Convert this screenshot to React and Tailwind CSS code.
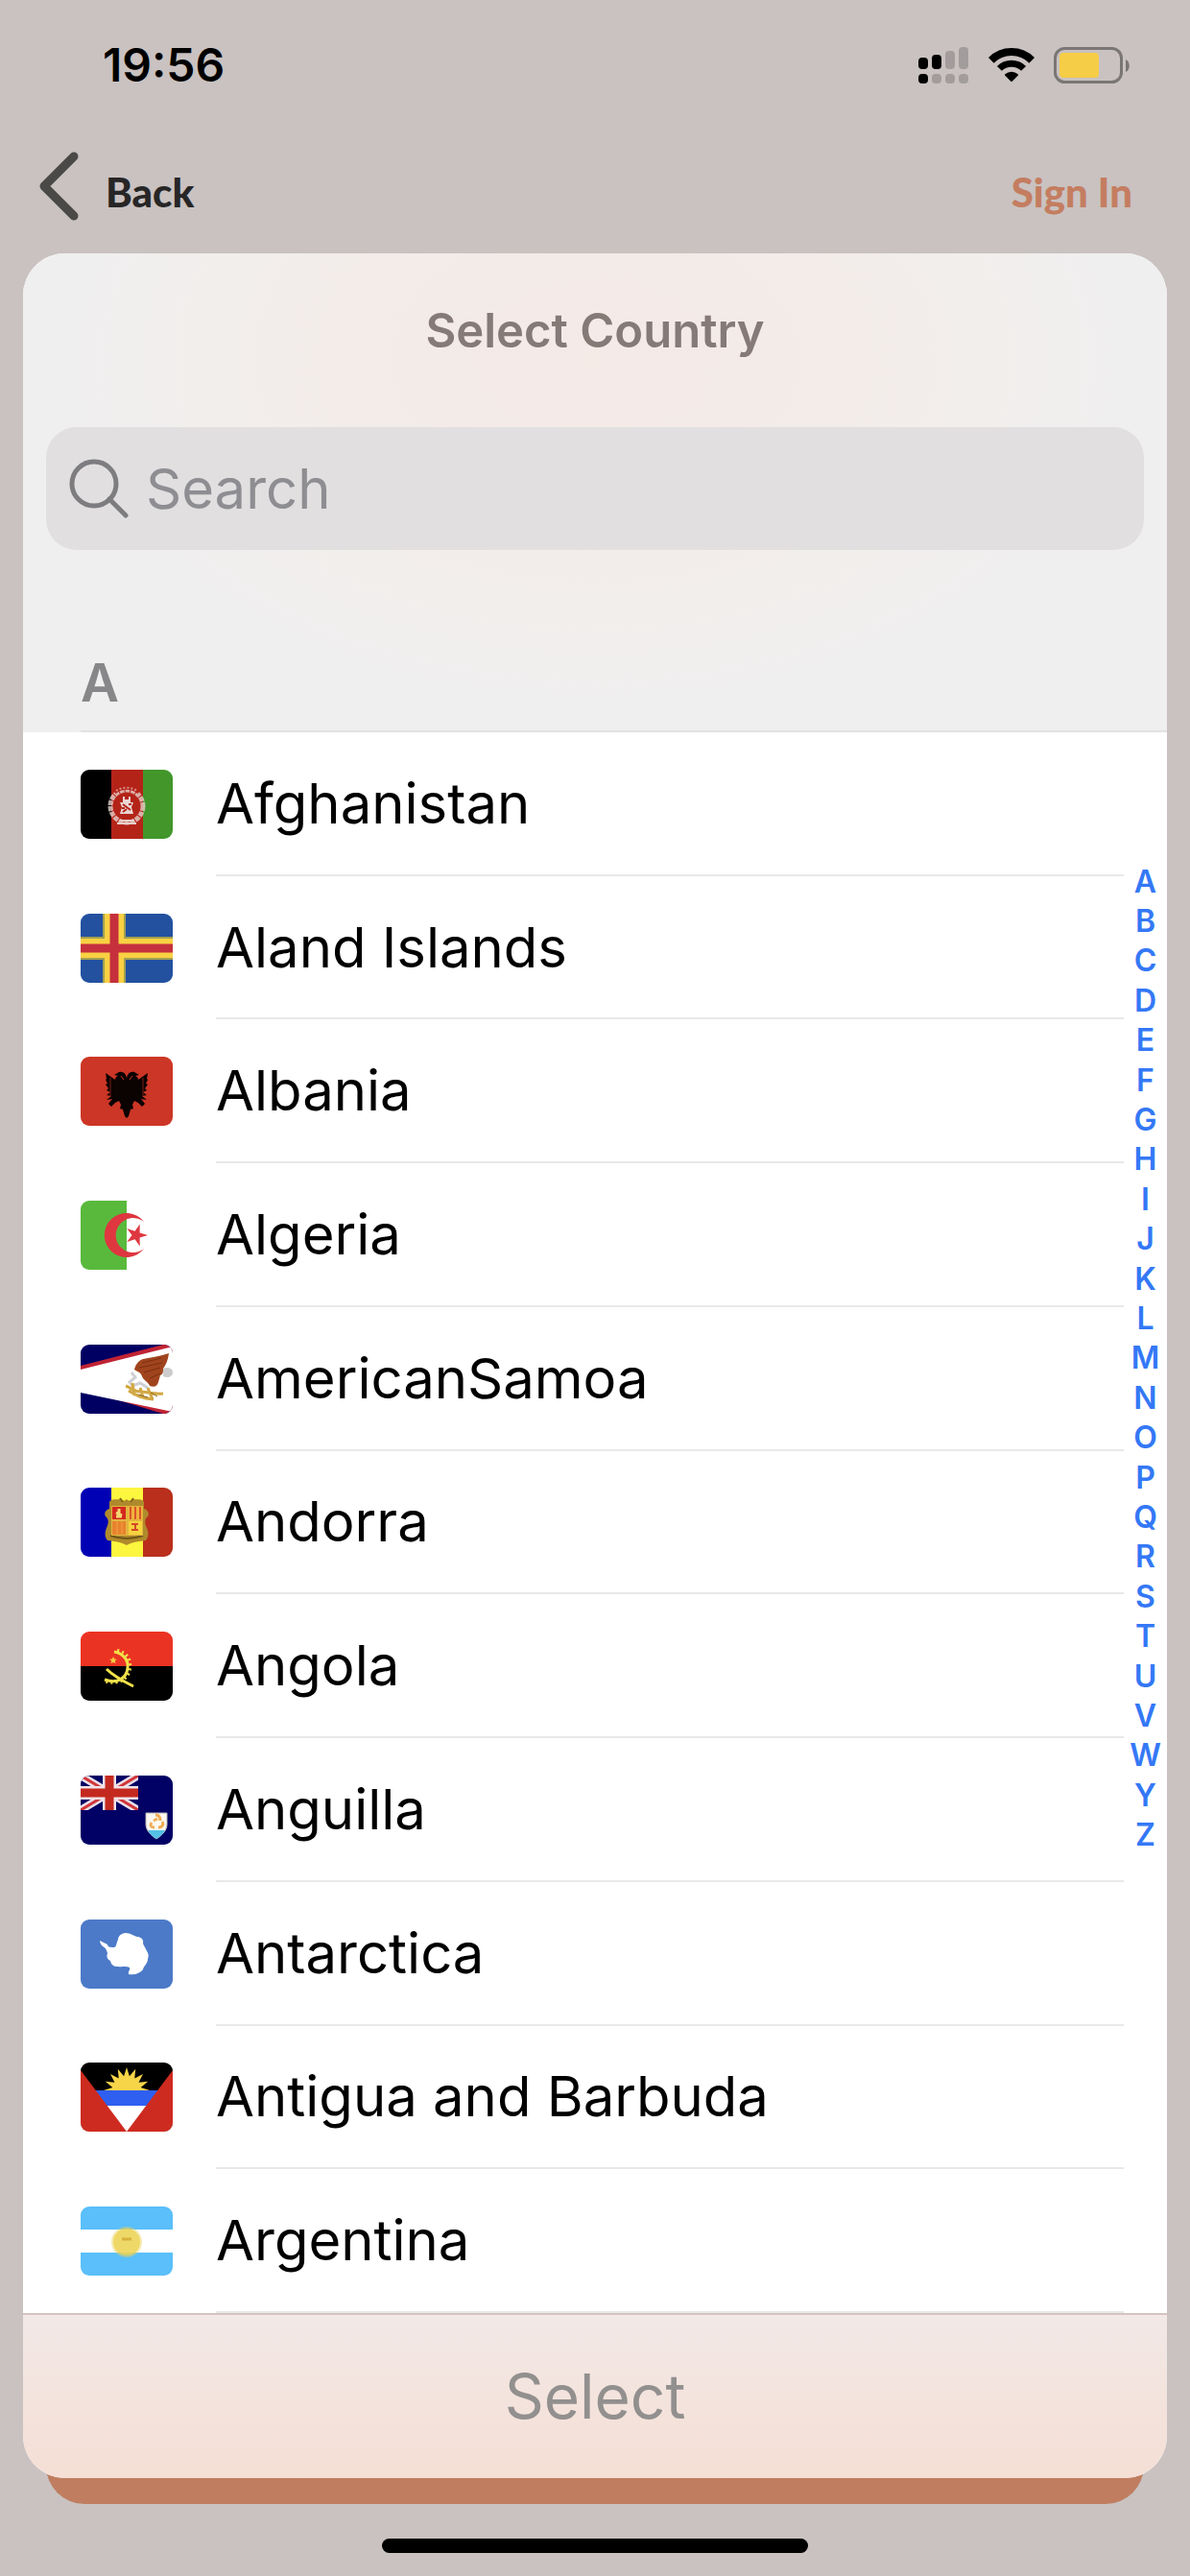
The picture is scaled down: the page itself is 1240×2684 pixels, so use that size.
import React, { useState } from 'react';

const LETTERS = 'ABCDEFGHIJKLMNOPQRSTUVWYZ'.split('');

const starPoints = (cx, cy, outer, inner, count, turn = -90) =>
    Array.from({ length: count * 2 }, (_, i) => {
        const r = i % 2 ? inner : outer;
        const a = ((turn + (i * 180) / count) * Math.PI) / 180;
        return `${(cx + r * Math.cos(a)).toFixed(1)},${(cy + r * Math.sin(a)).toFixed(1)}`;
    }).join(' ');

const Afghanistan = () => (
    <>
        <rect width="32" height="72" fill="#000" />
        <rect x="32" width="33" height="72" fill="#b42318" />
        <rect x="65" width="31" height="72" fill="#42962a" />
        <circle cx="48" cy="38" r="17" fill="none" stroke="#e6cfcb" strokeWidth="5" strokeDasharray="5 1" opacity="0.8" />
        <path d="M35 23a20 20 0 0 1 26 0" fill="none" stroke="#b42318" strokeWidth="5" />
        <path d="M37 22a20 20 0 0 1 22 0" fill="none" stroke="#d98d84" strokeWidth="2" strokeDasharray="2 2" />
        <path d="M40 53h16M38 56h20" stroke="#e6cfcb" strokeWidth="2" />
        <path d="M41 34h3v-6h2v3h4v-3h2v6h3l-2 5 2 7H41l2-7z" fill="#e9d5d2" />
        <path d="M44 36l8 6M44 44l4-3M50 36h3M43 40h3" stroke="#b42318" strokeWidth="2" />
    </>
);

const Aland = () => (
    <>
        <rect width="96" height="72" fill="#2351a0" />
        <path d="M35 0v72M0 36h96" stroke="#a3a04f" strokeWidth="24" />
        <path d="M35 0v72M0 36h96" stroke="#f9d143" strokeWidth="20" />
        <path d="M35 0v72M0 36h96" stroke="#c5303c" strokeWidth="9" />
    </>
);

const Albania = () => (
    <>
        <rect width="96" height="72" fill="#cc3626" />
        <path
            d="M48 22c-1-5-4-7-8-6l-5 3 4 1c-2 1-3 2-3 4-4-3-7-5-10-7l1 6-1 1 2 4-2 1 3 4-2 2 4 2-4 3 5 1-5 4 6-1-4 5 3 3 4-4 4-2 2 4-1 4 3 1 2 7 2 2 2-2 2-7 3-1-1-4 2-4 4 2 4 4 3-3-4-5 6 1-5-4 5-1-4-3 4-2-2-2 3-4-2-1 2-4-1-1 1-6c-3 2-6 4-10 7 0-2-1-3-3-4l4-1-5-3c-4-1-7 1-8 6z"
            fill="#0b0202"
        />
        <path d="M31 22v19M65 22v19" stroke="#7d1d13" strokeWidth="1" />
        <path d="M42 20l3 4M54 20l-3 4" stroke="#cc3626" strokeWidth="1" />
    </>
);

const Algeria = () => (
    <>
        <rect width="96" height="72" fill="#fff" />
        <rect width="48" height="72" fill="#59b93c" />
        <path d="M66 22A23 23 0 1 0 66 50A18 18 0 1 1 66 22z" fill="#de3740" />
        <polygon points={starPoints(58, 36, 12, 4.5, 5, 0)} fill="#de3740" />
    </>
);

const AmericanSamoa = () => (
    <>
        <rect width="96" height="72" fill="#000063" />
        <path d="M0 22L86 0h10v72H86L0 46z" fill="#c02334" />
        <path d="M0 26L96 2v68L0 50z" fill="#fff" />
        <path d="M92 9c-9 3-18 4-27 6-5 2-8 6-9 11 3 2 7 3 8 7s6 5 8 10c5 2 8 0 9-4l2-7c3-1 3-4 3-7 3-4 5-9 6-16z" fill="#a0441d" />
        <path d="M64 19l20-5M61 24l24-5M66 29l17-5M72 35l11-5" stroke="#7b2f10" strokeWidth="1" />
        <path d="M86 25c4-2 10-1 10 4s-6 6-10 4z" fill="#ccc" />
        <path d="M53 29l4 5-6 5 3 4 8-3 8 5" fill="none" stroke="#cfd0d4" strokeWidth="3" />
        <path d="M47 43c6 2 8 6 15 6s14 3 24 2M50 48c8 5 14 8 26 9M70 45l5 12M54 40l2 13M62 45l3 10" fill="none" stroke="#d2a844" strokeWidth="3" />
        <path d="M60 52l10 3M73 50l7 4" stroke="#8b6a25" strokeWidth="1" />
    </>
);

const Andorra = () => (
    <>
        <rect width="32" height="72" fill="#0000b4" />
        <rect x="32" width="33" height="72" fill="#fdf63e" />
        <rect x="65" width="31" height="72" fill="#b92f1c" />
        <path
            d="M30 15c2-4 8-2 11-3 2 2 5 2 7 0 2 2 5 2 7 0 4 1 9-1 11 3v7c4 1 6 5 4 8-4 3-3 8-1 12 2 5 2 9-1 13-7 1-13 1-20 5-7-4-13-4-20-5-3-4-3-8-1-13 2-4 3-9-1-12-2-3 0-7 4-8z"
            fill="#af8a2c"
        />
        <path d="M31 50q17 6 34 0" fill="none" stroke="#6f5618" strokeWidth="2" />
        <path d="M41 11l3 4M55 11l-3 4" stroke="#7d651c" strokeWidth="2" />
        <rect x="32" y="19" width="33" height="31" fill="#e2b53e" />
        <rect x="33" y="20" width="14" height="13" fill="#d4281f" />
        <path d="M40 22v9M37 26l6 3M37 30h6" stroke="#f6d873" strokeWidth="3" />
        <rect x="50" y="20" width="14" height="13" fill="#f2b13c" />
        <path d="M52 20v13M57 20v13M62 20v13" stroke="#d9552b" strokeWidth="2" />
        <rect x="33" y="35" width="14" height="14" fill="#e8822e" />
        <path d="M38 35v14M43 35v14" stroke="#efa43c" strokeWidth="1" />
        <rect x="50" y="35" width="14" height="14" fill="#f7d23e" />
        <path d="M53 38h7M53 44h7M57 38v7" stroke="#d2492a" strokeWidth="2" />
    </>
);

const Angola = () => (
    <>
        <rect width="96" height="36" fill="#eb3323" />
        <rect y="36" width="96" height="36" fill="#000" />
        <g fill="none" stroke="#f2e14a">
            <path d="M35 21c10 2 15 9 14 17-1 10-10 17-24 12" strokeWidth="3" />
            <path d="M38 20c10 2 14 9 13 18-1 11-12 18-26 13" strokeWidth="4" strokeDasharray="2 3" />
            <path d="M27 39c7 7 16 12 28 18" strokeWidth="3" />
        </g>
        <polygon points={starPoints(34, 30, 4, 2, 5)} fill="#f5c93f" />
    </>
);

const Anguilla = () => (
    <>
        <rect width="96" height="72" fill="#000065" />
        <svg width="60" height="36">
            <path d="M0 0l60 36M60 0L0 36" stroke="#ecdfe6" strokeWidth="8" />
            <path d="M0 0l60 36M60 0L0 36" stroke="#d0363a" strokeWidth="3" />
            <path d="M30 0v36M0 18h60" stroke="#f0e2e6" strokeWidth="14" />
            <path d="M30 0v36M0 18h60" stroke="#c4291f" strokeWidth="9" />
        </svg>
        <path d="M68 39h22v12c0 6-5 11-11 15-6-4-11-9-11-15z" fill="#fbf8f1" stroke="#b9b5ae" strokeWidth="1" />
        <path d="M70 57h18c-2 4-5 6-9 9-4-3-7-5-9-9z" fill="#54c1e6" />
        <path d="M78 41c4 0 5 3 5 6M85 48c2 3 0 6-4 6M77 54c-4 0-5-2-3-5M76 47l4-2" fill="none" stroke="#f0ad55" strokeWidth="3" />
    </>
);

const Antarctica = () => (
    <>
        <rect width="96" height="72" fill="#4c7ac8" />
        <path
            d="M20 22l8 4c0 3 4 3 7 3 3-1 2-5 4-8 0-4 4-7 8-7 5 0 8 3 12 4 4 0 7 3 6 7 1 3 3 5 4 8 2 3 2 5 1 8 0 5-4 7-5 11-3 4-8 6-15 5-1-3 2-4 1-7-4-2-8 0-12-1-5 0-7-2-8-6-4-2-4-5-3-8-1-3-2-6-5-7-2-2-3-4-3-6z"
            fill="#fff"
        />
    </>
);

const Antigua = () => (
    <>
        <rect width="96" height="72" fill="#000" />
        <polygon points={starPoints(48, 29, 24, 15, 16)} fill="#f7d548" />
        <rect y="29" width="96" height="16" fill="#2e5ff0" />
        <rect y="45" width="96" height="27" fill="#fff" />
        <path d="M0 8l48 64H0zM96 8L48 72h48z" fill="#ce2b20" />
    </>
);

const Argentina = () => (
    <>
        <rect width="96" height="72" fill="#5abffa" />
        <rect y="24" width="96" height="24" fill="#fff" />
        <circle cx="48" cy="37" r="16" fill="#ecd354" opacity="0.45" />
        <circle cx="48" cy="37" r="14" fill="#ecd354" opacity="0.8" />
        <path d="M43 34h10" stroke="#d8b23c" strokeWidth="3" />
    </>
);

const COUNTRIES = [
    { name: 'Afghanistan', Flag: Afghanistan },
    { name: 'Aland Islands', Flag: Aland },
    { name: 'Albania', Flag: Albania },
    { name: 'Algeria', Flag: Algeria },
    { name: 'AmericanSamoa', Flag: AmericanSamoa },
    { name: 'Andorra', Flag: Andorra },
    { name: 'Angola', Flag: Angola },
    { name: 'Anguilla', Flag: Anguilla },
    { name: 'Antarctica', Flag: Antarctica },
    { name: 'Antigua and Barbuda', Flag: Antigua },
    { name: 'Argentina', Flag: Argentina },
];

function StatusBar() {
    return (
        <div className="flex h-[136px] items-center justify-between pl-[107px] pr-[62px]">
            <span className="text-[48px] leading-none font-semibold text-black">19:56</span>
            <div className="flex items-center gap-5">
                {/* dual sim signal */}
                <svg className="h-[38px] w-[53px]" viewBox="0 0 53 38">
                    <g fill="#000">
                        <rect y="11" width="10" height="12" rx="4" />
                        <rect x="14" y="8" width="10" height="15" rx="4" />
                        <rect y="28" width="10" height="10" rx="4" />
                    </g>
                    <g fill="#a29d9c">
                        <rect x="28" y="4" width="10" height="19" rx="4" />
                        <rect x="42" width="10" height="23" rx="4" />
                        <rect x="14" y="28" width="10" height="10" rx="4" />
                        <rect x="28" y="28" width="10" height="10" rx="4" />
                        <rect x="42" y="28" width="10" height="10" rx="4" />
                    </g>
                </svg>
                <svg className="h-9 w-12" viewBox="0 0 48 36" fill="none" stroke="#000">
                    <path d="M2.8 12.8a30 30 0 0 1 42.4 0" strokeWidth="8" />
                    <path d="M11.4 21.4a17.8 17.8 0 0 1 25.2 0" strokeWidth="7" />
                    <path d="M18 28a9 9 0 0 1 12 0l-6 6z" fill="#000" strokeWidth="2" strokeLinejoin="round" />
                </svg>
                <svg className="h-[38px] w-20" viewBox="0 0 80 38">
                    <rect x="1.5" y="1.5" width="69" height="35" rx="10" fill="none" stroke="#7b7676" strokeWidth="3" />
                    <rect x="6" y="6" width="41" height="26" rx="4" fill="#f6cd46" />
                    <path d="M75 13c5 2 5 11 0 13z" fill="#7b7676" />
                </svg>
            </div>
        </div>
    );
}

export default function App() {
    const [query, setQuery] = useState('');
    const [selected, setSelected] = useState(null);

    const countries = COUNTRIES.filter((c) => c.name.toLowerCase().includes(query.toLowerCase()));

    return (
        <div className="flex min-h-screen flex-col bg-[#c9c2c1] font-['Inter',sans-serif]">
            <StatusBar />

            <nav className="flex h-32 items-center justify-between pl-10 pr-[60px] font-['Lato',sans-serif] text-[42px] font-black">
                <button type="button" className="flex items-center gap-7 text-[#272626]">
                    <svg className="h-[86px] w-[42px]" viewBox="0 0 42 86" fill="none" stroke="#4a4948" strokeWidth="9" strokeLinecap="round" strokeLinejoin="round">
                        <path d="M37 6L6 37l31 31" />
                    </svg>
                    Back
                </button>
                <button type="button" className="text-[#c47d60]">Sign In</button>
            </nav>

            <main className="relative z-10 mx-6 flex flex-1 flex-col overflow-hidden rounded-[44px] bg-white">
                <header className="bg-[#f0efef] bg-[radial-gradient(ellipse_at_50%_22%,#f4eae6_0%,#f3ebe8_25%,#f2eeec_45%,#f0efef_65%)]">
                    <h1 className="flex h-[181px] items-center justify-center pb-5 text-[49px] font-semibold text-[#857a76]">Select Country</h1>
                    <label className="mx-6 flex h-32 items-center gap-[18px] rounded-[32px] bg-[#e1dfe0] px-6">
                        <svg className="h-[62px] w-[62px] shrink-0" viewBox="0 0 62 62" fill="none" stroke="#7d7d80" strokeWidth="5" strokeLinecap="round">
                            <circle cx="26" cy="26" r="23" />
                            <path d="M42 42l17 17" />
                        </svg>
                        <input
                            type="search"
                            aria-label="Search"
                            placeholder="Search"
                            value={query}
                            onChange={(e) => setQuery(e.target.value)}
                            className="w-full bg-transparent text-[58px] leading-[72px] text-black outline-none placeholder:text-[#8e8e92]"
                        />
                    </label>
                    <div className="flex h-[190px] items-end pl-[60px]">
                        <h2 id="A" className="w-full border-b-2 border-[#e3e2e3] pb-[18px] text-[55px] leading-[64px] font-semibold text-[#87878a]">A</h2>
                    </div>
                </header>

                <div className="relative flex flex-1 flex-col">
                    <ul className="grid flex-1 auto-rows-fr pl-[60px] pr-[45px]">
                        {countries.map(({ name, Flag }) => (
                            <li key={name} className="flex">
                                <button type="button" onClick={() => setSelected(name)} className="flex min-h-36 w-full items-center gap-[45px] text-left">
                                    <svg className="h-[72px] w-24 shrink-0 rounded-[9px]" viewBox="0 0 96 72">
                                        <Flag />
                                    </svg>
                                    <span className="flex flex-1 items-center self-stretch border-b-2 border-[#e8e8e9] text-[58px] leading-[72px] text-black">{name}</span>
                                </button>
                            </li>
                        ))}
                    </ul>
                    <nav className="absolute top-[135px] right-0 grid h-[1035px] w-[45px] auto-rows-fr text-center text-[32px] font-semibold text-[#3478f6]">
                        {LETTERS.map((letter) => (
                            <a key={letter} href={`#${letter}`} className="flex items-center justify-center leading-none">{letter}</a>
                        ))}
                    </nav>
                </div>

                <button
                    type="button"
                    disabled={!selected}
                    className="h-[172px] border-t-2 border-[#d3c4c2] bg-linear-to-b from-[#f2e8e6] to-[#f5dfd5] text-[64px] leading-none text-[#92908f] enabled:text-[#3478f6]"
                >
                    Select
                </button>
            </main>

            {/* page button showing from under the sheet */}
            <div className="mx-12 -mt-11 h-[71px] rounded-b-[40px] bg-[#c07d60]" />
            <div className="mx-auto mt-9 mb-6 h-[15px] w-[444px] rounded-full bg-black" />
        </div>
    );
}
